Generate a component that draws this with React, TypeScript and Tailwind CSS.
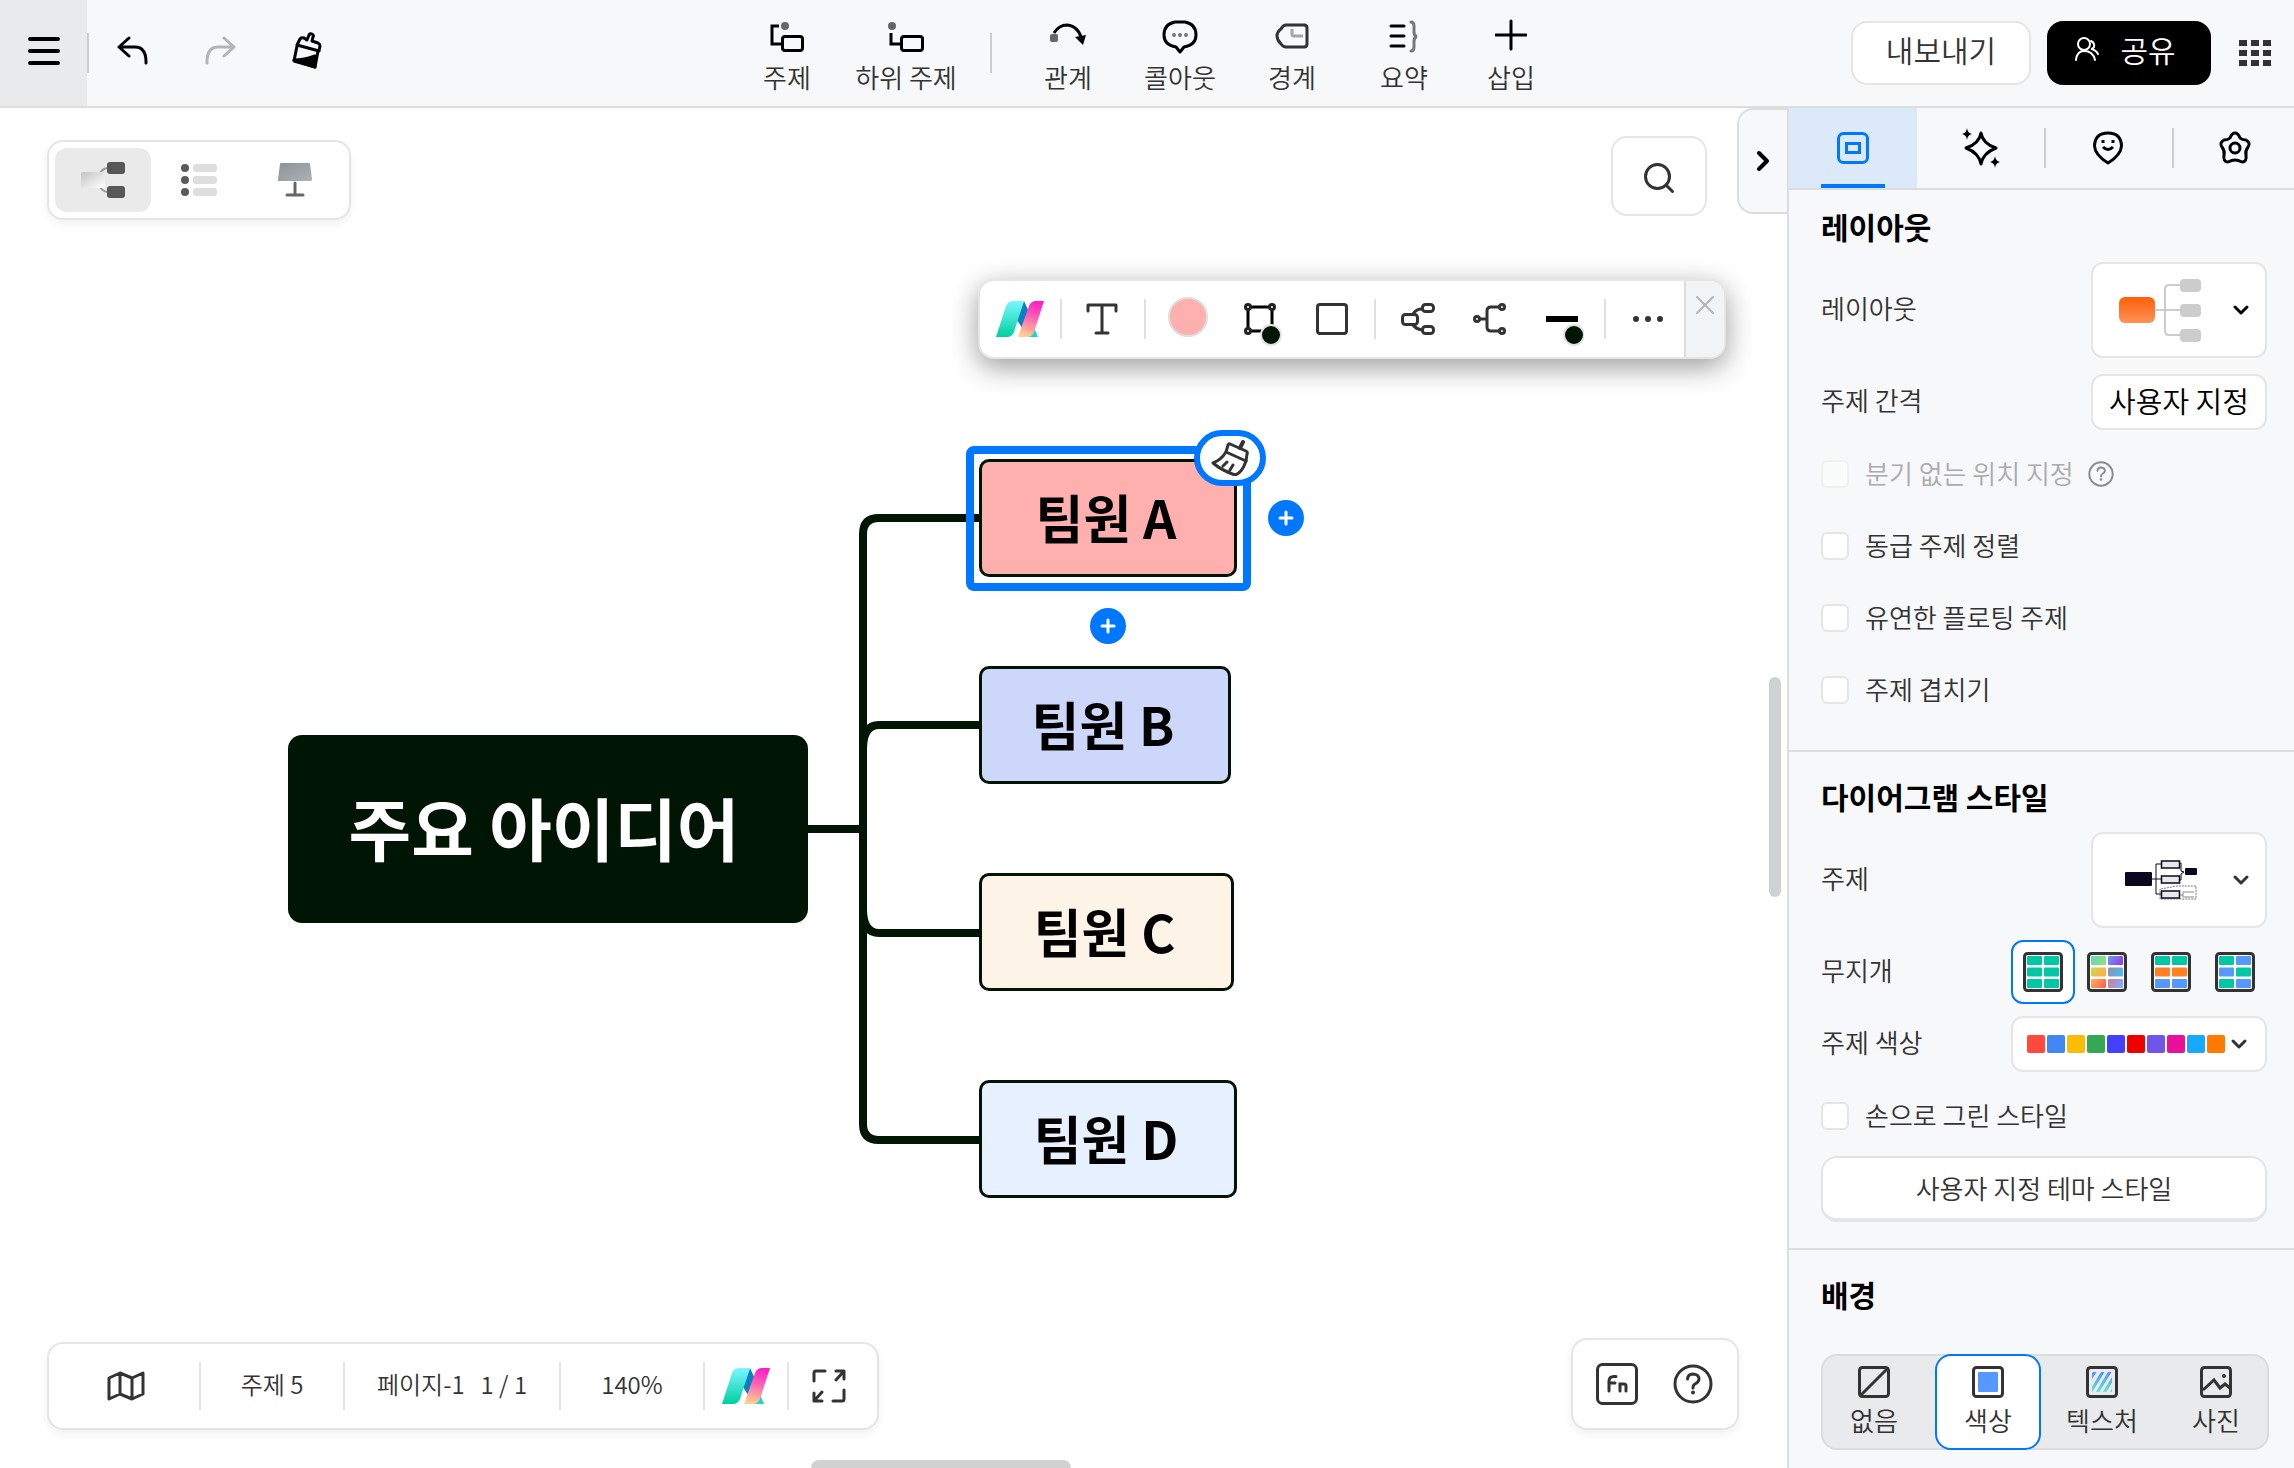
import React, { useState } from 'react';
import { ChevronDown, ChevronRight, Search, X } from 'lucide-react';

type IconProps = { className?: string };

/* ---------- Logo ---------- */

const Logo = ({ id }: { id: string }) => (
  <svg width="48" height="36" viewBox="0 0 48 36" aria-hidden="true">
    <defs>
      <linearGradient id={`${id}-teal`} x1="0" y1="0" x2="0" y2="1">
        <stop offset="0%" stopColor="#7af7ff" />
        <stop offset="100%" stopColor="#00cfa0" />
      </linearGradient>
      <linearGradient id={`${id}-pink`} x1="0.6" y1="0" x2="0.4" y2="1">
        <stop offset="0%" stopColor="#ff1fc7" />
        <stop offset="45%" stopColor="#ff62b4" />
        <stop offset="100%" stopColor="#ffd08f" />
      </linearGradient>
    </defs>
    <path d="M33 14L42 36H30Z" fill="#12dcc4" />
    <path d="M28 0L34 13L28 30L21 19Z" fill="#0a7fc4" />
    <path d="M17 0H28L18 31Q16 36 11 36H0L10 5Q12 0 17 0Z" fill={`url(#${id}-teal)`} />
    <path d="M40 0H48L38 31Q36 36 31 36H22L33 5Q35 0 40 0Z" fill={`url(#${id}-pink)`} />
  </svg>
);

/* ---------- Header icons ---------- */

const MenuIcon = () => (
  <svg width="32" height="28" viewBox="0 0 32 28" stroke="#000" strokeWidth="4" strokeLinecap="round">
    <path d="M2 2H30M2 14H30M2 26H30" />
  </svg>
);

const UndoIcon = ({ className }: IconProps) => (
  <svg className={className} width="32" height="30" viewBox="0 0 32 30" fill="none" stroke="currentColor" strokeWidth="3" strokeLinecap="round" strokeLinejoin="round">
    <path d="M12 2L2 11L12 20M2 11H18Q29 11 29 26V27" />
  </svg>
);

const BrushIcon = () => (
  <svg width="30" height="38" viewBox="0 0 30 38" fill="none" stroke="#000" strokeWidth="3" strokeLinejoin="round">
    <path d="M5 13L8 7Q9 5 12 6L15 8L17 3Q18 1 20 2Q22 3 21 5L20 9L26 11Q28 12 28 14L27 19Z" />
    <path d="M5 14L2 29L23 35L26 19" />
    <path d="M2 28Q12 28 23 24L23 35Z" fill="#000" />
  </svg>
);

const TopicIcon = () => (
  <svg width="36" height="36" viewBox="0 0 36 36" fill="none" stroke="#000" strokeWidth="3">
    <path d="M10 7H3V25H13" />
    <rect x="13.500" y="17.500" width="20" height="14" rx="2.500" />
    <circle cx="16" cy="7" r="4" fill="#666" stroke="none" />
  </svg>
);

const SubTopicIcon = () => (
  <svg width="38" height="36" viewBox="0 0 38 36" fill="none" stroke="#000" strokeWidth="3">
    <path d="M4 14V25H14" />
    <rect x="14.500" y="17.500" width="21" height="14" rx="2.500" />
    <circle cx="5" cy="7" r="4" fill="#666" stroke="none" />
  </svg>
);

const RelationIcon = () => (
  <svg width="36" height="36" viewBox="0 0 36 36" fill="none">
    <path d="M4 14Q9 6 17 6Q29 7 32 22" stroke="#000" strokeWidth="3" />
    <path d="M25 18L36 16L33 26Z" fill="#000" />
    <rect x="0" y="15" width="8" height="8" rx="2" fill="#666" />
  </svg>
);

const CalloutIcon = () => (
  <svg width="36" height="36" viewBox="0 0 36 36" fill="none">
    <path d="M13 3H23Q34 5 34 16Q34 26 22 28L18 33L14 28Q2 26 2 16Q2 5 13 3Z" stroke="#000" strokeWidth="3" strokeLinejoin="round" />
    <circle cx="12" cy="16" r="2" fill="#777" />
    <circle cx="18" cy="16" r="2" fill="#777" />
    <circle cx="24" cy="16" r="2" fill="#777" />
  </svg>
);

const BoundaryIcon = () => (
  <svg width="34" height="36" viewBox="0 0 34 36" fill="none" strokeLinejoin="round">
    <path d="M11 6H29Q32 6 32 9V25Q32 28 29 28H11Q8 28 6 25Q2 21 2 17Q2 13 6 10Q8 6 11 6Z" stroke="#333" strokeWidth="3" />
    <path d="M17 10V15Q17 17 19 17H28" stroke="#a5a5a5" strokeWidth="3" />
  </svg>
);

const SummaryIcon = () => (
  <svg width="30" height="36" viewBox="0 0 30 36" fill="none" strokeLinecap="round">
    <path d="M2 7H15M2 17H15M2 27H15" stroke="#000" strokeWidth="3" />
    <path d="M22 3Q25 3 25 7V13Q25 17 28 17.500Q25 18 25 22V28Q25 32 22 32" stroke="#777" strokeWidth="3" />
  </svg>
);

const InsertIcon = () => (
  <svg width="32" height="36" viewBox="0 0 32 36" stroke="#000" strokeWidth="3" strokeLinecap="round">
    <path d="M16 2V30M1 16H31" />
  </svg>
);

const ShareIcon = () => (
  <svg width="26" height="26" viewBox="0 0 26 26" fill="none" stroke="#fff" strokeWidth="2" strokeLinecap="round">
    <circle cx="10" cy="8" r="6" />
    <path d="M2 24Q3 15 10 15Q19 15 21 24M17 5Q21 7 20 11Q19 13 17 13Q22 14 24 18" />
  </svg>
);

const GridIcon = () => (
  <svg width="32" height="26" viewBox="0 0 32 26" fill="#333">
    {[0, 10, 20].map((y) => [0, 12, 24].map((x) => <rect key={`${x}-${y}`} x={x} y={y} width="8" height="6" />))}
  </svg>
);

/* ---------- View switcher icons ---------- */

const MindMapViewIcon = () => (
  <svg width="44" height="36" viewBox="0 0 44 36" fill="none">
    <defs>
      <linearGradient id="mm" x1="0" y1="0" x2="1" y2="1">
        <stop offset="0%" stopColor="#c4c4c4" />
        <stop offset="100%" stopColor="#fff" />
      </linearGradient>
    </defs>
    <path d="M19 11Q22 6 28 6M19 25Q22 30 28 30" stroke="#999" strokeWidth="2" />
    <rect x="0" y="10" width="24" height="16" rx="2" fill="url(#mm)" />
    <rect x="26" y="0" width="18" height="12" rx="3" fill="#575757" />
    <rect x="26" y="24" width="18" height="12" rx="3" fill="#575757" />
  </svg>
);

const OutlineViewIcon = () => (
  <svg width="36" height="32" viewBox="0 0 36 32">
    {[0, 12, 24].map((y) => (
      <g key={y}>
        <circle cx="4" cy={y + 4} r="4" fill="#5a5a5a" />
        <rect x="12" y={y} width="24" height="8" rx="3" fill="#dedede" />
      </g>
    ))}
  </svg>
);

const SlideViewIcon = () => (
  <svg width="36" height="34" viewBox="0 0 36 34" fill="none">
    <defs>
      <linearGradient id="slide" x1="0" y1="0" x2="1" y2="1">
        <stop offset="0%" stopColor="#8d9297" />
        <stop offset="100%" stopColor="#adb2b8" />
      </linearGradient>
    </defs>
    <path d="M4 0H32Q33 0 33 1L35 16Q35 18 34 18H2Q0 18 1 16L3 1Q3 0 4 0Z" fill="url(#slide)" />
    <path d="M18 20V31M10 32H26" stroke="#666" strokeWidth="3" strokeLinecap="round" />
  </svg>
);

/* ---------- Floating toolbar icons ---------- */

const TextIcon = () => (
  <svg width="32" height="32" viewBox="0 0 32 32" fill="none" stroke="#333" strokeWidth="3" strokeLinecap="round" strokeLinejoin="round">
    <path d="M2 8V2H30V8M16 2V30M10 30H22" />
  </svg>
);

const BorderIcon = () => (
  <svg width="44" height="44" viewBox="-6 0 44 44" fill="none" stroke="#000" strokeWidth="3">
    <path d="M4 4H28V28H4Z" />
    <circle cx="4" cy="4" r="2.500" fill="#fff" stroke="#222" />
    <circle cx="28" cy="4" r="2.500" fill="#fff" stroke="#222" />
    <circle cx="4" cy="28" r="2.500" fill="#fff" stroke="#222" />
    <circle cx="27" cy="32" r="10" fill="#001504" stroke="#e2e2e2" strokeWidth="2" />
  </svg>
);

const ShapeIcon = () => (
  <svg width="32" height="32" viewBox="0 0 32 32" fill="none" stroke="#333" strokeWidth="3">
    <rect x="1.500" y="1.500" width="29" height="29" rx="2.500" />
  </svg>
);

const StructureIcon = () => (
  <svg width="34" height="32" viewBox="0 0 34 32" fill="none" stroke="#333" strokeWidth="3">
    <rect x="1.500" y="11.500" width="15" height="10" rx="3" />
    <rect x="21.500" y="1.500" width="11" height="7" rx="3" />
    <rect x="21.500" y="23.500" width="11" height="7" rx="3" />
    <path d="M12 11Q15 6 21 6M12 22Q15 26 21 27" />
  </svg>
);

const BranchIcon = () => (
  <svg width="34" height="32" viewBox="0 0 34 32" fill="none" stroke="#333" strokeWidth="3">
    <path d="M7 16H14M26 4H18Q14 4 14 8V24Q14 28 18 28H26" />
    <circle cx="4" cy="16" r="2.500" />
    <circle cx="29" cy="4" r="2.500" />
    <circle cx="29" cy="28" r="2.500" />
  </svg>
);

const LineIcon = () => (
  <svg width="44" height="44" viewBox="-6 0 44 44">
    <rect x="0" y="13" width="32" height="6" fill="#000" />
    <circle cx="28" cy="32" r="10" fill="#001504" stroke="#e2e2e2" strokeWidth="2" />
  </svg>
);

const MoreIcon = () => (
  <svg width="32" height="8" viewBox="0 0 32 8" fill="#333">
    <circle cx="4" cy="4" r="3" />
    <circle cx="16" cy="4" r="3" />
    <circle cx="28" cy="4" r="3" />
  </svg>
);

/* ---------- Bottom bar icons ---------- */

const MapIcon = () => (
  <svg width="38" height="30" viewBox="0 0 38 30" fill="none" stroke="#333" strokeWidth="3" strokeLinejoin="round">
    <path d="M2 7L13 2L25 7L36 2V23L25 28L13 23L2 28ZM13 2V23M25 7V28" />
  </svg>
);

const FullscreenIcon = () => (
  <svg width="34" height="34" viewBox="0 0 34 34" fill="none" stroke="#333" strokeWidth="3" strokeLinecap="round" strokeLinejoin="round">
    <path d="M2 12V4Q2 2 4 2H13M24 2H32V10M32 2L24 11M32 21V30Q32 32 30 32H21M10 32H2V24M2 32L10 23" />
  </svg>
);

const FnIcon = () => (
  <svg width="42" height="42" viewBox="0 0 42 42" fill="none" stroke="#333" strokeWidth="3" strokeLinecap="round">
    <rect x="1.500" y="1.500" width="39" height="39" rx="5" />
    <path d="M13 28V18Q13 13.500 18 13.500H20M13 20H19M24 28V21H28Q30 21 30 23V28" />
  </svg>
);

const HelpIcon = ({ className }: IconProps) => (
  <svg className={className} viewBox="0 0 40 40" fill="none" stroke="currentColor" strokeWidth="3" strokeLinecap="round">
    <circle cx="20" cy="20" r="18" />
    <path d="M14.500 15Q15 10 20 10Q26 10.500 26 15Q26 18 22 20Q20 21 20 24" />
    <circle cx="20" cy="28.500" r="2" fill="currentColor" stroke="none" />
  </svg>
);

/* ---------- Panel tab icons ---------- */

const PanelIcon = () => (
  <svg width="32" height="32" viewBox="0 0 32 32" fill="none" stroke="#0077ff" strokeWidth="3">
    <rect x="1.500" y="1.500" width="29" height="29" rx="5" />
    <rect x="9.500" y="11.500" width="13" height="9" />
  </svg>
);

const SparkleIcon = () => (
  <svg width="40" height="40" viewBox="0 0 40 40" fill="none">
    <path d="M20 5Q22 16 35 20Q22 25 20 36Q18 25 5 20Q18 16 20 5Z" stroke="#000" strokeWidth="3" strokeLinejoin="round" />
    <path d="M6 0Q6.500 5 11 6Q6.500 7 6 12Q5.500 7 1 6Q5.500 5 6 0ZM34 28Q34.500 33 39 34Q34.500 35 34 40Q33.500 35 29 34Q33.500 33 34 28Z" fill="#000" />
  </svg>
);

const StickerIcon = () => (
  <svg width="32" height="34" viewBox="0 0 32 34" fill="none" stroke="#000" strokeWidth="3">
    <path d="M16 2Q29 2 29.500 15Q29 24 16 32Q3 24 2.500 15Q3 2 16 2Z" strokeLinejoin="round" />
    <path d="M11 9V12M21 9V12M11 16Q16 21 21 16" />
  </svg>
);

const ThemeIcon = () => (
  <svg width="34" height="34" viewBox="0 0 34 34" fill="none" stroke="#000" strokeWidth="3" strokeLinejoin="round">
    <path d="M17 2Q20 2 22 7Q24 9 28 9Q33 12 30 16Q27 20 28 24Q29 31 24 31Q20 29 17 29Q14 29 10 31Q5 31 6 24Q7 20 4 16Q1 12 6 9Q10 9 12 7Q14 2 17 2Z" />
    <circle cx="17" cy="17" r="5" />
  </svg>
);

/* ---------- Panel pictures ---------- */

const LayoutPreview = () => (
  <svg width="82" height="64" viewBox="0 0 82 64" fill="none">
    <defs>
      <linearGradient id="orange" x1="0" y1="0" x2="0" y2="1">
        <stop offset="0%" stopColor="#ff5f0a" />
        <stop offset="100%" stopColor="#ff9255" />
      </linearGradient>
    </defs>
    <path d="M36 32H61M61 7H50Q46 7 46 11V53Q46 57 50 57H61" stroke="#ccc" strokeWidth="2" />
    <rect x="0" y="19" width="36" height="26" rx="6" fill="url(#orange)" />
    {[1, 26, 51].map((y) => (
      <rect key={y} x="61" y={y} width="21" height="13" rx="4" fill="#ccc" />
    ))}
  </svg>
);

const ThemePreview = () => (
  <svg width="72" height="42" viewBox="0 0 72 42" fill="none" stroke="#0a0820">
    <path d="M26 20H37M37 5H31V35H37M54 4H56V12L59 13L56 15V21H54" strokeWidth="1" />
    <path d="M36 30L52 27H71V40H35V30" stroke="#777" strokeDasharray="2 1" />
    <rect x="0" y="13" width="27" height="14" rx="1" fill="#0a0820" stroke="none" />
    {[2, 17, 32].map((y) => (
      <rect key={y} x="36.500" y={y} width="18" height="7" fill="#e9e9ec" strokeWidth="1.500" />
    ))}
    <rect x="60" y="9" width="12" height="7" rx="1" fill="#0a0820" stroke="none" />
    <path d="M55 36H58M69 33H58V38H69" stroke="#888" />
  </svg>
);

const rainbows: { name: string; cells: string[] }[] = [
  { name: '단색', cells: ['#00c8a5', '#00c8a5', '#00c8a5', '#00c8a5', '#00c8a5', '#00c8a5'] },
  { name: '그라데이션', cells: ['url(#rb0)', 'url(#rb1)', 'url(#rb2)', 'url(#rb3)', 'url(#rb4)', 'url(#rb5)'] },
  { name: '줄무늬', cells: ['#00c8a5', '#00c8a5', '#ff7f22', '#ff7f22', '#5598ff', '#5598ff'] },
  { name: '체크', cells: ['#00c8a5', '#5598ff', '#5598ff', '#00c8a5', '#00c8a5', '#5598ff'] },
];

const gradients = [
  ['#5fdcb0', '#8edc8a'],
  ['#6aa0f0', '#8f45ec'],
  ['#c8d850', '#ffb04a'],
  ['#a08aa0', '#4ab8f8'],
  ['#ffae60', '#ff6a50'],
  ['#e07a80', '#80a8ff'],
];

const RainbowIcon = ({ cells }: { cells: string[] }) => (
  <svg width="40" height="40" viewBox="0 0 40 40">
    <defs>
      {gradients.map(([from, to], i) => (
        <linearGradient key={i} id={`rb${i}`} x1="0" y1="0" x2="1" y2="0.4">
          <stop offset="0%" stopColor={from} />
          <stop offset="100%" stopColor={to} />
        </linearGradient>
      ))}
    </defs>
    <rect x="1.500" y="1.500" width="37" height="37" rx="3" fill="#fff" stroke="#333" strokeWidth="3" />
    {cells.map((fill, i) => (
      <rect key={i} x={i % 2 ? 21 : 4} y={4 + Math.floor(i / 2) * 11.5} width="15" height="9" rx="1" fill={fill} />
    ))}
  </svg>
);

const swatches = ['#ff4a3d', '#4285f4', '#fbbc05', '#34a853', '#4540ff', '#ee0000', '#7055e6', '#e9109c', '#18a8ff', '#ff7a00'];

const NoneIcon = () => (
  <svg width="32" height="32" viewBox="0 0 32 32" fill="none" stroke="#333" strokeWidth="3">
    <rect x="1.500" y="1.500" width="29" height="29" rx="3" />
    <path d="M3 29L29 3" />
  </svg>
);

const ColorIcon = () => (
  <svg width="32" height="32" viewBox="0 0 32 32" fill="none" stroke="#333" strokeWidth="3">
    <rect x="1.500" y="1.500" width="29" height="29" rx="3" />
    <rect x="6" y="6" width="20" height="20" rx="1" fill="#5598ff" stroke="none" />
  </svg>
);

const TextureIcon = () => (
  <svg width="32" height="32" viewBox="0 0 32 32" fill="none">
    <defs>
      <linearGradient id="tex" gradientUnits="userSpaceOnUse" x1="0" y1="6" x2="0" y2="26">
        <stop offset="0%" stopColor="#4f90ff" />
        <stop offset="100%" stopColor="#62e8cc" />
      </linearGradient>
      <clipPath id="texClip">
        <rect x="6" y="6" width="20" height="20" />
      </clipPath>
    </defs>
    <rect x="1.500" y="1.500" width="29" height="29" rx="3" stroke="#333" strokeWidth="3" />
    <path d="M0 20L10 4M4 27L18 4M11 27L25 4M18 27L32 4M24 29L36 8" stroke="url(#tex)" strokeWidth="3" clipPath="url(#texClip)" />
  </svg>
);

const PhotoIcon = () => (
  <svg width="32" height="32" viewBox="0 0 32 32" fill="none" stroke="#333" strokeWidth="3">
    <rect x="1.500" y="1.500" width="29" height="29" rx="3" />
    <path d="M3 24L14 14L20 22L25 18L30 22" />
    <circle cx="24" cy="10" r="2" fill="#333" stroke="none" />
  </svg>
);

/* ---------- Header ---------- */

const ToolButton = ({ label, className, children }: { label: string; className: string; children: React.ReactNode }) => (
  <button className={`flex flex-col items-center gap-1 text-[26px] leading-9 text-[#333] ${className}`}>
    {children}
    {label}
  </button>
);

const Header = () => (
  <header className="flex h-27 shrink-0 items-center border-b-2 border-[#dcdddf] bg-[#f7f8fa]">
    <div className="flex flex-1 basis-0 items-center self-stretch">
      <button aria-label="메뉴" className="flex w-[87px] items-center justify-center self-stretch bg-[#e9eaeb] pb-1">
        <MenuIcon />
      </button>
      <div className="h-10 w-0.5 bg-[#cccdcf]" />
      <button aria-label="실행 취소" className="flex w-[87px] justify-center pb-1">
        <UndoIcon className="text-black" />
      </button>
      <button aria-label="다시 실행" className="flex w-[87px] justify-center pb-1" disabled>
        <UndoIcon className="-scale-x-100 text-[#b3b4b5]" />
      </button>
      <button aria-label="서식 복사" className="flex w-[87px] justify-center pb-1">
        <BrushIcon />
      </button>
    </div>

    <nav className="flex items-center">
      <ToolButton label="주제" className="w-[110px] pt-2"><TopicIcon /></ToolButton>
      <ToolButton label="하위 주제" className="w-32 pt-2"><SubTopicIcon /></ToolButton>
      <div className="mx-5 h-10 w-0.5 bg-[#cccdcf]" />
      <ToolButton label="관계" className="w-28 pt-2"><RelationIcon /></ToolButton>
      <ToolButton label="콜아웃" className="w-28 pt-2"><CalloutIcon /></ToolButton>
      <ToolButton label="경계" className="w-28 pt-2"><BoundaryIcon /></ToolButton>
      <ToolButton label="요약" className="w-28 pt-2"><SummaryIcon /></ToolButton>
      <ToolButton label="삽입" className="w-[102px] pt-2"><InsertIcon /></ToolButton>
    </nav>

    <div className="flex flex-1 basis-0 items-center justify-end gap-4">
      <button className="h-16 w-[180px] rounded-2xl border-2 border-[#e5e5e5] bg-white pb-2 text-[30px] leading-10 text-[#333]">
        내보내기
      </button>
      <button className="flex h-16 w-[164px] items-center justify-center gap-5 rounded-2xl bg-black pr-2 pb-2 text-[30px] leading-10 text-white">
        <ShareIcon />
        공유
      </button>
      <button aria-label="앱" className="mr-[23px] ml-3">
        <GridIcon />
      </button>
    </div>
  </header>
);

/* ---------- Mind map ---------- */

const topics = [
  { label: '팀원 A', box: 'top-[351px] w-[258px] bg-[#fdb0ae]' },
  { label: '팀원 B', box: 'top-[558px] w-[252px] bg-[#cdd7fa]' },
  { label: '팀원 C', box: 'top-[765px] w-[255px] bg-[#fef3e7]' },
  { label: '팀원 D', box: 'top-[972px] w-[258px] bg-[#e6f0ff]' },
];

const AddButton = ({ className }: { className: string }) => (
  <button aria-label="주제 추가" className={`absolute flex size-9 items-center justify-center rounded-full bg-[#0077ff] ${className}`}>
    <svg width="16" height="16" viewBox="0 0 16 16" stroke="#fff" strokeWidth="3" strokeLinecap="round">
      <path d="M8 2V14M2 8H14" />
    </svg>
  </button>
);

const MindMap = () => (
  <div className="absolute inset-0 overflow-hidden">
    <svg className="absolute top-[351px] left-[808px]" width="172" height="740" viewBox="0 0 172 740" fill="none" stroke="#001504" strokeWidth="8">
      <path d="M0 370H55" />
      <path d="M172 59H71Q55 59 55 75V665Q55 681 71 681H172" />
      <path d="M55 290Q55 266 71 266H172M55 450Q55 474 71 474H172" />
    </svg>

    <div className="absolute top-[627px] left-[288px] flex h-[188px] w-[520px] items-center justify-center rounded-[14px] bg-[#001504] pr-2 pb-1 text-[68px] leading-none font-bold text-white">
      주요 아이디어
    </div>

    {topics.map(({ label, box }) => (
      <div key={label} className={`absolute left-[979px] flex h-[118px] items-center justify-center rounded-[10px] border-3 border-[#001504] pr-1 pb-0.5 text-[52px] leading-none font-bold text-black ${box}`}>
        {label}
      </div>
    ))}

    {/* Selection around the first topic */}
    <div className="absolute top-[338px] left-[966px] h-[145px] w-[285px] rounded-lg border-8 border-[#0077ff]" />
    <button aria-label="스타일 정리" className="absolute top-[322px] left-[1194px] flex h-14 w-[72px] items-center justify-center rounded-full border-6 border-[#0077ff] bg-white">
      <svg width="38" height="36" viewBox="0 0 38 36" fill="none" stroke="#333" strokeWidth="3" strokeLinecap="round" strokeLinejoin="round">
        <path d="M19 4L35 11Q37 12 36 14L35 21L15 12L17 5Q18 3 19 4Z" />
        <path d="M29 8L32 2" strokeWidth="4" />
        <path d="M15 12Q10 20 2 23Q10 30 24 35Q31 33 35 21M12 26L16 22M19 30L22 25" />
      </svg>
    </button>
    <AddButton className="top-[392px] left-[1268px]" />
    <AddButton className="top-[500px] left-[1090px]" />
  </div>
);

/* ---------- Floating toolbar ---------- */

const FloatButton = ({ label, children }: { label: string; children: React.ReactNode }) => (
  <button aria-label={label} className="flex h-full w-[72px] items-center justify-center">
    {children}
  </button>
);

const Divider = () => <div className="h-10 w-0.5 shrink-0 bg-[#e0e0e0]" />;

const FloatingToolbar = () => (
  <div className="absolute top-[171px] left-[978px] flex h-20 items-center rounded-2xl border-2 border-[#e5e5e5] bg-white shadow-[0_8px_28px_rgba(0,0,0,0.4)]">
    <div className="flex h-full items-center px-1">
      <FloatButton label="AI"><Logo id="float" /></FloatButton>
    </div>
    <Divider />
    <div className="flex h-full items-center pr-1.5 pl-1">
      <FloatButton label="텍스트"><TextIcon /></FloatButton>
    </div>
    <Divider />
    <div className="flex h-full items-center px-1.5">
      <FloatButton label="채우기"><span className="mb-1 size-10 rounded-full border-2 border-[#dedede] bg-[#fdb0ae]" /></FloatButton>
      <FloatButton label="테두리"><span className="pt-3"><BorderIcon /></span></FloatButton>
      <FloatButton label="모양"><ShapeIcon /></FloatButton>
    </div>
    <Divider />
    <div className="flex h-full items-center px-1.5">
      <FloatButton label="구조"><StructureIcon /></FloatButton>
      <FloatButton label="분기"><BranchIcon /></FloatButton>
      <FloatButton label="선"><span className="pt-3"><LineIcon /></span></FloatButton>
    </div>
    <Divider />
    <div className="flex h-full items-center pl-1.5">
      <FloatButton label="더 보기"><MoreIcon /></FloatButton>
    </div>
    <button aria-label="닫기" className="flex h-full w-10 justify-center rounded-r-[14px] border-l-2 border-[#dcdddf] bg-[#f2f3f5] pt-2">
      <X className="size-8 text-[#b5b5b5]" strokeWidth={1.5} />
    </button>
  </div>
);

/* ---------- Canvas ---------- */

const Canvas = () => (
  <main className="relative flex min-w-0 flex-1 flex-col justify-between overflow-hidden bg-white pt-7 pb-[38px]">
    <MindMap />

    <div className="relative flex items-start justify-between pr-20 pl-[47px]">
      <div className="mt-1 flex h-20 items-center rounded-2xl border-2 border-[#e5e5e5] bg-white px-1.5 shadow-[0_4px_10px_rgba(0,0,0,0.06)]">
        <button aria-label="마인드맵" className="flex h-16 w-24 items-center justify-center rounded-xl bg-[#eaeaea]">
          <MindMapViewIcon />
        </button>
        <button aria-label="개요" className="flex h-16 w-24 items-center justify-center">
          <OutlineViewIcon />
        </button>
        <button aria-label="슬라이드" className="flex h-16 w-24 items-center justify-center">
          <SlideViewIcon />
        </button>
      </div>
      <button aria-label="검색" className="flex h-20 w-24 items-center justify-center rounded-2xl border-2 border-[#e5e5e5] bg-white pt-1">
        <Search className="size-9 text-[#333]" strokeWidth={2} />
      </button>
    </div>

    <button aria-label="패널 접기" className="absolute top-0 right-0 flex h-[106px] w-[50px] items-center justify-center rounded-l-2xl border-2 border-r-0 border-[#dcdddf] bg-[#f7f8fa]">
      <ChevronRight className="size-8 text-black" strokeWidth={3} />
    </button>

    <FloatingToolbar />

    <div className="relative flex items-end justify-between pr-12 pl-[47px]">
      <div className="flex h-[88px] items-center rounded-2xl border-2 border-[#e5e5e5] bg-white text-2xl text-[#333] shadow-[0_4px_10px_rgba(0,0,0,0.06)]">
        <button aria-label="지도" className="flex w-[150px] justify-center pl-1">
          <MapIcon />
        </button>
        <div className="h-12 w-0.5 bg-[#e5e5e5]" />
        <span className="w-[142px] pb-1 text-center">주제 5</span>
        <div className="h-12 w-0.5 bg-[#e5e5e5]" />
        <button className="flex w-[214px] justify-center gap-4 pb-1">
          <span>페이지-1</span>
          <span>1 / 1</span>
        </button>
        <div className="h-12 w-0.5 bg-[#e5e5e5]" />
        <button className="w-[142px] pb-1 text-center">140%</button>
        <div className="h-12 w-0.5 bg-[#e5e5e5]" />
        <button aria-label="AI" className="flex w-[82px] justify-center">
          <Logo id="bar" />
        </button>
        <div className="h-12 w-0.5 bg-[#e5e5e5]" />
        <button aria-label="전체 화면" className="mr-2 flex w-20 justify-center">
          <FullscreenIcon />
        </button>
      </div>
      <div className="flex h-[92px] items-center rounded-2xl border-2 border-[#e5e5e5] bg-white px-1.5 shadow-[0_4px_10px_rgba(0,0,0,0.06)]">
        <button aria-label="단축키" className="flex w-19 justify-center">
          <FnIcon />
        </button>
        <button aria-label="도움말" className="flex w-19 justify-center text-[#333]">
          <HelpIcon className="size-10" />
        </button>
      </div>
    </div>

    {/* Scroll thumbs */}
    <div className="absolute top-[569px] right-1.5 h-[220px] w-3 rounded-full bg-[#d0d1d2]" />
    <div className="absolute bottom-0 left-[811px] h-2 w-[260px] rounded-t-lg bg-[#d0d1d2]" />
  </main>
);

/* ---------- Side panel ---------- */

const Check = ({ label, disabled, children }: { label: string; disabled?: boolean; children?: React.ReactNode }) => (
  <div className="flex h-18 items-center">
    <label className={`flex items-center gap-4 ${disabled ? 'text-[#aaabac]' : ''}`}>
      <input
        type="checkbox"
        disabled={disabled}
        className="size-7 appearance-none rounded-md border-2 border-[#e5e5e5] bg-white checked:bg-[#0077ff] disabled:border-[#f0f0f1] disabled:bg-[#fafbfb]"
      />
      <span className="pb-0.5">{label}</span>
    </label>
    {children}
  </div>
);

const PreviewSelect = ({ id, options, className, children }: { id: string; options: string[]; className: string; children: React.ReactNode }) => (
  <div className={`relative flex items-center justify-between rounded-xl border-2 border-[#e5e5e5] bg-white ${className}`}>
    {children}
    <select id={id} className="absolute inset-0 size-full cursor-pointer opacity-0">
      {options.map((option) => (
        <option key={option}>{option}</option>
      ))}
    </select>
  </div>
);

const backgrounds = [
  { name: '없음', Icon: NoneIcon },
  { name: '색상', Icon: ColorIcon },
  { name: '텍스처', Icon: TextureIcon },
  { name: '사진', Icon: PhotoIcon },
];

const SidePanel = () => {
  const [rainbow, setRainbow] = useState('단색');
  const [background, setBackground] = useState('색상');

  return (
    <aside className="w-[507px] shrink-0 overflow-hidden border-l-2 border-[#dcdddf] bg-[#f7f8fa] text-[26px] leading-9 text-[#333]">
      <div className="flex h-[82px] items-center border-b-2 border-[#dcdddf]">
        <button aria-label="패널" className="relative flex h-full w-32 shrink-0 items-center justify-center bg-[#dce9f9]">
          <PanelIcon />
          <span className="absolute inset-x-8 bottom-0 h-1 bg-[#0077ff]" />
        </button>
        <button aria-label="AI" className="flex w-[127px] shrink-0 justify-center"><SparkleIcon /></button>
        <button aria-label="스티커" className="flex h-10 w-32 shrink-0 items-center justify-center border-l-2 border-[#cccdcf] pr-0.5"><StickerIcon /></button>
        <button aria-label="테마" className="flex h-10 w-32 shrink-0 items-center justify-center border-l-2 border-[#cccdcf] pr-1"><ThemeIcon /></button>
      </div>

      <section className="border-b-2 border-[#dcdddf] pt-4 pr-[27px] pb-6 pl-8">
        <h2 className="mb-4 text-[30px] leading-10 font-bold text-black">레이아웃</h2>
        <div className="flex items-center justify-between">
          <label htmlFor="layout" className="pb-1">레이아웃</label>
          <PreviewSelect id="layout" options={['오른쪽 맵', '왼쪽 맵']} className="h-24 w-44 pr-3 pl-[26px]">
            <LayoutPreview />
            <ChevronDown className="size-6 text-black" strokeWidth={3} />
          </PreviewSelect>
        </div>
        <div className="mt-4 mb-2 flex items-center justify-between">
          <span className="pb-1">주제 간격</span>
          <button className="h-14 w-44 rounded-xl border-2 border-[#e5e5e5] bg-white pb-1 text-[29px] text-black">사용자 지정</button>
        </div>
        <Check label="분기 없는 위치 지정" disabled>
          <HelpIcon className="ml-3.5 size-[26px] text-[#8a8b8c]" />
        </Check>
        <Check label="동급 주제 정렬" />
        <Check label="유연한 플로팅 주제" />
        <Check label="주제 겹치기" />
      </section>

      <section className="border-b-2 border-[#dcdddf] pt-6 pr-[27px] pb-[26px] pl-8">
        <h2 className="mb-4 text-[30px] leading-10 font-bold text-black">다이어그램 스타일</h2>
        <div className="flex items-center justify-between">
          <label htmlFor="theme" className="pb-1">주제</label>
          <PreviewSelect id="theme" options={['기본', '어두운']} className="h-24 w-44 pr-3 pl-8">
            <ThemePreview />
            <ChevronDown className="size-6 text-[#333]" strokeWidth={3} />
          </PreviewSelect>
        </div>
        <fieldset className="my-3 flex items-center justify-between">
          <legend className="float-left pb-1">무지개</legend>
          <div className="flex">
            {rainbows.map(({ name, cells }) => (
              <label
                key={name}
                className={`flex size-16 items-center justify-center rounded-xl border-2 ${rainbow === name ? 'border-[#0077ff] bg-white' : 'border-transparent'}`}
              >
                <input type="radio" name="rainbow" aria-label={name} checked={rainbow === name} onChange={() => setRainbow(name)} className="sr-only" />
                <RainbowIcon cells={cells} />
              </label>
            ))}
          </div>
        </fieldset>
        <div className="mb-2 flex items-center justify-between">
          <label htmlFor="colors" className="pb-1">주제 색상</label>
          <PreviewSelect id="colors" options={['무지개', '파스텔']} className="h-14 w-64 pr-3.5 pl-3.5">
            <div className="flex gap-0.5">
              {swatches.map((color) => (
                <span key={color} className="size-[18px] rounded-xs" style={{ background: color }} />
              ))}
            </div>
            <ChevronDown className="size-6 text-[#333]" strokeWidth={3} />
          </PreviewSelect>
        </div>
        <Check label="손으로 그린 스타일" />
        <button className="mt-1 h-[66px] w-full rounded-2xl border-2 border-b-4 border-[#e3e4e5] bg-white">사용자 지정 테마 스타일</button>
      </section>

      <section className="pt-6 pr-[25px] pl-8">
        <h2 className="mb-10 text-[30px] leading-10 font-bold text-black">배경</h2>
        <div className="flex h-24 gap-2 rounded-2xl bg-[#e9eaeb] ring-2 ring-[#dcdddf] ring-inset">
          {backgrounds.map(({ name, Icon }) => (
            <label
              key={name}
              className={`flex flex-1 flex-col items-center gap-1 rounded-2xl border-2 pt-2.5 ${background === name ? 'border-[#0077ff] bg-white' : 'border-transparent'}`}
            >
              <input type="radio" name="background" checked={background === name} onChange={() => setBackground(name)} className="sr-only" />
              <Icon />
              {name}
            </label>
          ))}
        </div>
      </section>
    </aside>
  );
};

export default function App() {
  return (
    <div className="flex h-screen flex-col overflow-hidden font-['Noto_Sans_CJK_KR',sans-serif] font-[350]">
      <Header />
      <div className="flex min-h-0 flex-1">
        <Canvas />
        <SidePanel />
      </div>
    </div>
  );
}
